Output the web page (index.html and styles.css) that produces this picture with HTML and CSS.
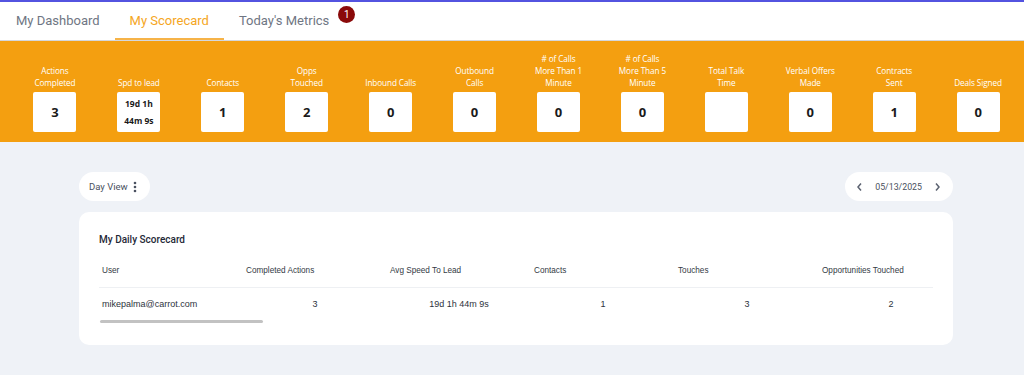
FILE: index.html
```html
<!DOCTYPE html>
<html>

<head>
    <title>My Scorecard</title>
    <meta charset="utf-8">
    <meta name="viewport" content="width=device-width, initial-scale=1">
    <link rel="stylesheet" href="styles.css">
</head>

<body>
    <nav class="tabs">
        <a class="tab">My Dashboard</a>
        <a class="tab active">My Scorecard</a>
        <a class="tab">Today's Metrics<span class="badge">1</span></a>
    </nav>

    <ul class="metrics">
        <li class="metric"><span class="label">Actions<br>Completed</span><span class="box">3</span></li>
        <li class="metric"><span class="label">Spd to lead</span><span class="box small">19d 1h<br>44m 9s</span></li>
        <li class="metric"><span class="label">Contacts</span><span class="box">1</span></li>
        <li class="metric"><span class="label">Opps<br>Touched</span><span class="box">2</span></li>
        <li class="metric"><span class="label">Inbound Calls</span><span class="box">0</span></li>
        <li class="metric"><span class="label">Outbound<br>Calls</span><span class="box">0</span></li>
        <li class="metric"><span class="label"># of Calls<br>More Than 1<br>Minute</span><span class="box">0</span></li>
        <li class="metric"><span class="label"># of Calls<br>More Than 5<br>Minute</span><span class="box">0</span></li>
        <li class="metric"><span class="label">Total Talk<br>Time</span><span class="box"></span></li>
        <li class="metric"><span class="label">Verbal Offers<br>Made</span><span class="box">0</span></li>
        <li class="metric"><span class="label">Contracts<br>Sent</span><span class="box">1</span></li>
        <li class="metric"><span class="label">Deals Signed</span><span class="box">0</span></li>
    </ul>

    <main class="content">
        <div class="toolbar">
            <button class="pill view-btn">Day View
                <svg width="4" height="12" viewBox="0 0 4 12"><circle cx="2" cy="2" r="1.3"/><circle cx="2" cy="6" r="1.3"/><circle cx="2" cy="10" r="1.3"/></svg>
            </button>
            <div class="pill date-nav">
                <svg width="7" height="10" viewBox="0 0 7 10"><path d="M5 1.5 L2 5 L5 8.5"/></svg>
                <span>05/13/2025</span>
                <svg width="7" height="10" viewBox="0 0 7 10"><path d="M2 1.5 L5 5 L2 8.5"/></svg>
            </div>
        </div>

        <section class="card">
            <h2 class="card-title">My Daily Scorecard</h2>
            <div class="table-wrap">
                <table class="score-table">
                    <thead>
                        <tr>
                            <th>User</th>
                            <th>Completed Actions</th>
                            <th>Avg Speed To Lead</th>
                            <th>Contacts</th>
                            <th>Touches</th>
                            <th>Opportunities Touched</th>
                        </tr>
                    </thead>
                    <tbody>
                        <tr>
                            <td class="user">mikepalma@carrot.com</td>
                            <td>3</td>
                            <td>19d 1h 44m 9s</td>
                            <td>1</td>
                            <td>3</td>
                            <td>2</td>
                        </tr>
                    </tbody>
                </table>
            </div>
            <div class="scroll-track"><div class="scroll-thumb"></div></div>
        </section>
    </main>
</body>

</html>
```

FILE: styles.css
```css
body,
html {
    margin: 0;
    padding: 0;
    font-family: Roboto, "Liberation Sans", sans-serif;
    background-color: #eff2f7;
}

body {
    border-top: 2px solid #5353e0;
    height: 373px;
    overflow: hidden;
}

.tabs {
    display: flex;
    height: 38px;
    padding-left: 1px;
    background-color: #ffffff;
    border-bottom: 1px solid #d4d7dc;
}

.tab {
    position: relative;
    display: flex;
    align-items: center;
    padding: 0 15px;
    font-size: 13px;
    color: #6f7683;
    border-bottom: 2px solid transparent;
}

.tab.active {
    color: #f5a623;
    border-bottom-color: #f6b348;
}

.badge {
    position: absolute;
    top: 4px;
    right: -11px;
    width: 17px;
    height: 17px;
    border-radius: 50%;
    background-color: #8a0a0a;
    color: #ffffff;
    font-size: 10px;
    display: flex;
    align-items: center;
    justify-content: center;
}

.metrics {
    list-style: none;
    margin: 0;
    padding: 0 4px 10px 13px;
    height: 91px;
    display: flex;
    align-items: flex-end;
    background-color: #f49f10;
}

.metric {
    flex: 1;
    display: flex;
    flex-direction: column;
    align-items: center;
}

.label {
    font-family: "Open Sans", sans-serif;
    font-size: 8.2px;
    line-height: 12px;
    color: #ffffff;
    text-align: center;
    margin-bottom: 3px;
    letter-spacing: -0.1px;
}

.box {
    width: 43px;
    height: 40px;
    background-color: #ffffff;
    border-radius: 2px;
    display: flex;
    align-items: center;
    justify-content: center;
    font-family: "Open Sans", sans-serif;
    font-weight: bold;
    font-size: 13px;
    color: #1a1a1a;
}

.box.small {
    font-size: 8.5px;
    line-height: 17px;
    text-align: center;
}

.content {
    padding: 30px 71px 0 79px;
}

.toolbar {
    display: flex;
    justify-content: space-between;
    margin-bottom: 11px;
}

.pill {
    height: 29px;
    border-radius: 15px;
    background-color: #ffffff;
    border: none;
    display: flex;
    align-items: center;
    font-family: Roboto, sans-serif;
    font-size: 9.5px;
    color: #4a5160;
}

.view-btn {
    padding: 0 13px 0 10px;
    gap: 5px;
}

.view-btn svg {
    fill: #4a5160;
}

.date-nav {
    padding: 0 12px 0 11px;
    gap: 12px;
    font-size: 8.8px;
}

.date-nav svg {
    fill: none;
    stroke: #5b6270;
    stroke-width: 1.5;
}

.card {
    background-color: #ffffff;
    border-radius: 10px;
    padding: 22px 20px 20px;
    height: 91px;
}

.card-title {
    margin: 0 0 21px;
    font-size: 10px;
    font-weight: 500;
    color: #1f2937;
}

.table-wrap {
    overflow: hidden;
}

.score-table {
    border-collapse: collapse;
    font-family: "Liberation Sans", Arial, sans-serif;
    table-layout: fixed;
    width: 864px;
}

.score-table th {
    width: 138px;
    text-align: left;
    font-weight: normal;
    font-size: 8.2px;
    color: #333a44;
    padding: 0 3px 12px;
    border-bottom: 1px solid #eef0f3;
}

.score-table td {
    text-align: center;
    font-size: 9px;
    color: #2d333c;
    padding: 11px 3px 0;
}

.score-table td.user {
    text-align: left;
}

.scroll-track {
    margin-top: 11px;
    height: 3px;
}

.scroll-thumb {
    width: 163px;
    height: 3px;
    margin-left: 1px;
    border-radius: 2px;
    background-color: #c2c2c2;
}
```
